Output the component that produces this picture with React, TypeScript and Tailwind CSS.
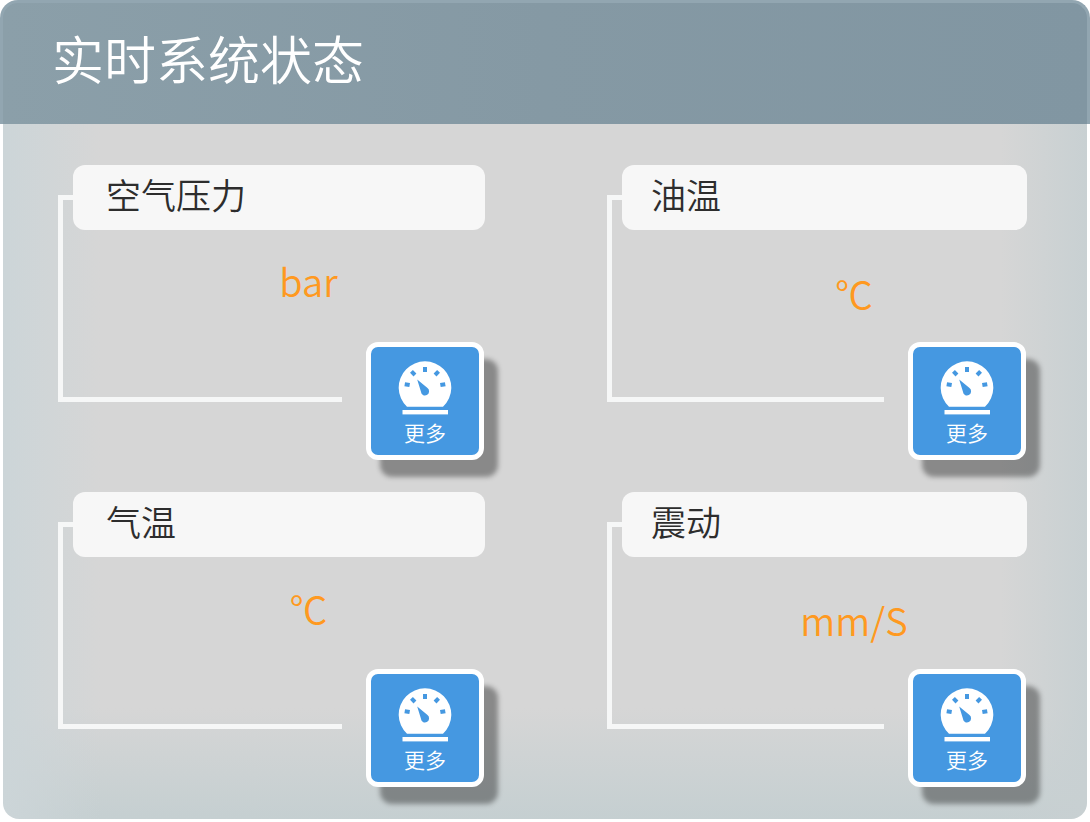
import React from "react";

type Metric = {
  name: string;
  unit: string;
  titlePadding: string;
  unitPadding: string;
};

const metrics: Metric[] = [
  { name: "空气压力", unit: "bar", titlePadding: "pl-[33px]", unitPadding: "pt-7" },
  { name: "油温", unit: "℃", titlePadding: "pl-[29px]", unitPadding: "pt-10" },
  { name: "气温", unit: "℃", titlePadding: "pl-[33px]", unitPadding: "pt-7" },
  { name: "震动", unit: "mm/S", titlePadding: "pl-[29px]", unitPadding: "pt-10" },
];

function GaugeIcon() {
  return (
    <svg className="h-14 w-[54px]" viewBox="0 0 54 56" aria-hidden="true">
      <path d="M9 46.8 A26.3 26.3 0 1 1 45 46.8 Z" fill="white" />
      <rect x="4.5" y="50" width="45.5" height="4.4" fill="white" />
      <g fill="#4598e1">
        <rect x="25" y="7" width="4" height="5" />
        <rect x="-2" y="-2.5" width="4" height="5" transform="translate(15.2 13.2) rotate(-45)" />
        <rect x="-2" y="-2.5" width="4" height="5" transform="translate(38.8 13.2) rotate(45)" />
        <rect x="-2" y="-2.5" width="4" height="5" transform="translate(9.2 24.6) rotate(-80)" />
        <rect x="-2" y="-2.5" width="4" height="5" transform="translate(44.8 24.6) rotate(80)" />
        <path d="M19.2 19.6 L29.5 28.1 A4.1 4.1 0 1 1 22.9 31.5 Z" />
      </g>
    </svg>
  );
}

function MetricCard({ name, unit, titlePadding, unitPadding }: Metric) {
  return (
    <article className="grid">
      <div className="col-start-1 row-start-1 mt-[30px] mr-[143px] mb-[58px] border-y-5 border-l-5 border-[#f6f7f7]" />
      <div className="col-start-1 row-start-1 flex flex-col">
        <h2
          className={`ml-[15px] flex h-[65px] items-center rounded-xl bg-[#f7f7f7] pb-2 text-[35px] leading-none font-[350] text-[#2d2d2d] ${titlePadding}`}
        >
          {name}
        </h2>
        <p
          className={`h-28 pl-[74px] text-center text-[38px] leading-[46px] font-[350] text-[#ff9920] ${unitPadding}`}
        >
          {unit}
        </p>
        <button
          type="button"
          className="mr-px flex h-[118px] w-[118px] flex-col items-center gap-0.5 self-end rounded-xl border-5 border-white bg-[#4598e1] pt-[13px] text-[21px] leading-7 font-[350] text-white shadow-[14px_17px_5px_rgba(0,0,0,0.36)]"
        >
          <GaugeIcon />
          更多
        </button>
      </div>
    </article>
  );
}

export default function App() {
  return (
    <main className="bg-white pb-[3px] font-['Noto_Sans_CJK_SC',sans-serif]">
      <header className="flex h-[124px] items-center rounded-t-[18px] border-x-3 border-t-3 border-[#92a6b1] bg-linear-to-r from-[#8b9fa9] via-[#8599a4] to-[#8196a2] pb-3 pl-[49px]">
        <h1 className="text-[52px] leading-none font-[350] text-white">实时系统状态</h1>
      </header>
      <section className="mx-[3px] rounded-b-2xl bg-[#d6d6d6] bg-[linear-gradient(to_right,#ccd5d8_0%,#ccd5d800_9%,#c8d0d200_92%,#c8d0d2_100%),linear-gradient(to_bottom,#c5cfd100_84%,#c5cfd1_100%)] pt-[41px] pr-[60px] pb-8 pl-[55px]">
        <div className="grid grid-cols-[427fr_420fr] gap-x-[122px] gap-y-8">
          {metrics.map((metric) => (
            <MetricCard key={metric.name} {...metric} />
          ))}
        </div>
      </section>
    </main>
  );
}
